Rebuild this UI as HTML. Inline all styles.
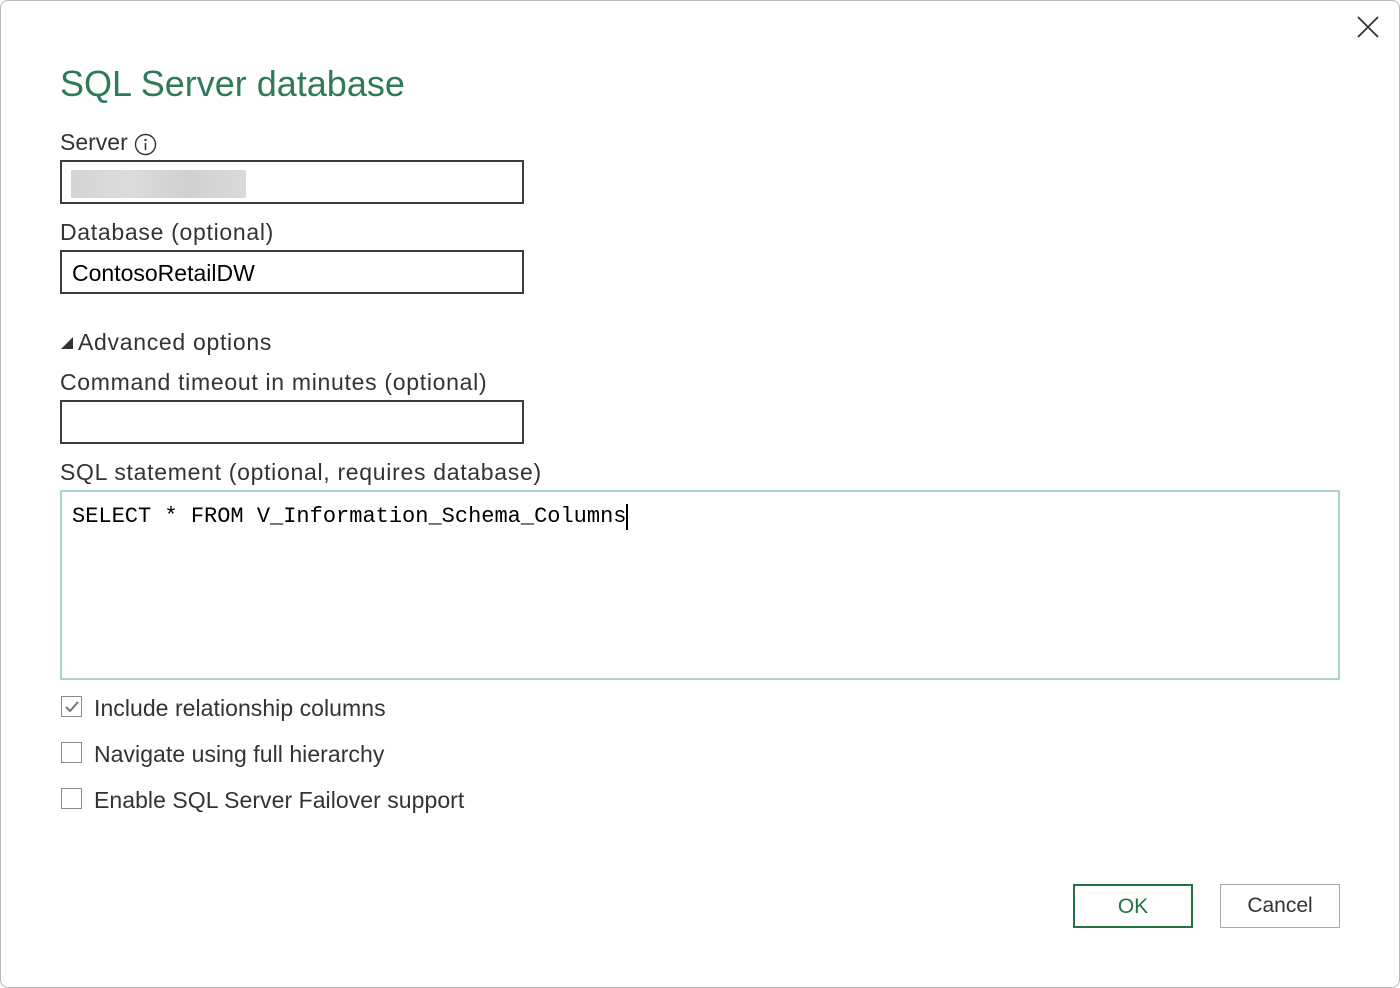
<!DOCTYPE html>
<html><head><style>
body{margin:0;width:1400px;height:988px;background:#fff;font-family:"Liberation Sans",sans-serif;position:relative;overflow:hidden}
.frame{position:absolute;left:0;top:0;width:1398px;height:986px;border:1px solid #b8b8b8;border-radius:8px}
.a{position:absolute;white-space:nowrap}
.lbl{font-size:23px;letter-spacing:0.7px;color:#333}
.box{position:absolute;border:2px solid #3c3c3c;box-sizing:border-box;background:#fff}
.cb{position:absolute;left:61px;width:21px;height:21px;border:1.5px solid #8a8a8a;box-sizing:border-box}
.btn{position:absolute;top:884px;width:120px;height:44px;box-sizing:border-box;font-size:21px;text-align:center;line-height:42px}
.ck{letter-spacing:0.05px}
</style></head><body>
<div class="frame"></div>
<svg class="a" style="left:1356px;top:15px" width="24" height="24"><path d="M2 2L22 22M22 2L2 22" stroke="#333" stroke-width="1.8"/></svg>
<div class="a" style="left:60px;top:63px;font-size:36px;color:#2f7a58">SQL Server database</div>
<div class="a lbl" style="left:60px;top:129px;letter-spacing:0">Server</div>
<svg class="a" style="left:134px;top:133px" width="23" height="23"><circle cx="11.5" cy="11.5" r="10" fill="none" stroke="#333" stroke-width="1.4"/><circle cx="11.5" cy="7" r="1.2" fill="#333"/><path d="M11.5 10v7" stroke="#333" stroke-width="1.6"/></svg>
<div class="box" style="left:60px;top:160px;width:464px;height:44px"></div>
<div class="a" style="left:71px;top:170px;width:175px;height:28px;background:linear-gradient(90deg,#d4d4d4,#dcdcdc,#d0d0d0,#dadada)"></div>
<div class="a lbl" style="left:60px;top:219px">Database (optional)</div>
<div class="box" style="left:60px;top:250px;width:464px;height:44px"></div>
<div class="a" style="left:72px;top:260px;font-size:23px;color:#000">ContosoRetailDW</div>
<svg class="a" style="left:60px;top:334px" width="14" height="16"><path d="M1 15L13 15L13 3Z" fill="#333"/></svg>
<div class="a lbl" style="left:78px;top:329px">Advanced options</div>
<div class="a lbl" style="left:60px;top:369px">Command timeout in minutes (optional)</div>
<div class="box" style="left:60px;top:400px;width:464px;height:44px"></div>
<div class="a lbl" style="left:60px;top:459px">SQL statement (optional, requires database)</div>
<div class="box" style="left:60px;top:490px;width:1280px;height:190px;border:2px solid #a8d8c4"></div>
<div class="a" style="left:72px;top:504px;font-family:'Liberation Mono',monospace;font-size:22px;color:#000">SELECT * FROM V_Information_Schema_Columns</div>
<div class="a" style="left:626px;top:504px;width:2px;height:26px;background:#000"></div>
<div class="cb" style="top:696px"></div>
<svg class="a" style="left:63px;top:698px" width="18" height="18"><path d="M3 9L7 13L15 4" fill="none" stroke="#777" stroke-width="2"/></svg>
<div class="a lbl ck" style="left:94px;top:695px">Include relationship columns</div>
<div class="cb" style="top:742px"></div>
<div class="a lbl ck" style="left:94px;top:741px">Navigate using full hierarchy</div>
<div class="cb" style="top:788px"></div>
<div class="a lbl ck" style="left:94px;top:787px">Enable SQL Server Failover support</div>
<div class="btn" style="left:1073px;border:2px solid #217346;color:#217346">OK</div>
<div class="btn" style="left:1220px;border:1.5px solid #aaa;color:#333">Cancel</div>
</body></html>
